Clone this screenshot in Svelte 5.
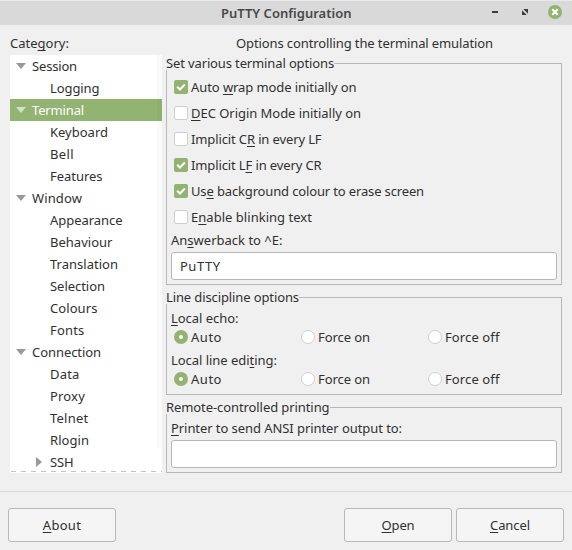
<script>
  // Distributes the remaining space between letters so a label has the given width.
  function fit(node, width) {
    const apply = () => {
      node.style.letterSpacing = '0px';
      const natural = node.getBoundingClientRect().width;
      const count = node.textContent.length;
      node.style.letterSpacing = `${(width - natural) / count}px`;
    };
    apply();
    document.fonts?.ready.then(apply);
  }

  const tree = [
    ['Session', 0, 45, 'open'], ['Logging', 1, 49.5],
    ['Terminal', 0, 52, 'open', true], ['Keyboard', 1, 58], ['Bell', 1, 24], ['Features', 1, 52.5],
    ['Window', 0, 50, 'open'], ['Appearance', 1, 72.5], ['Behaviour', 1, 62.5], ['Translation', 1, 68],
    ['Selection', 1, 55], ['Colours', 1, 47.5], ['Fonts', 1, 34.5],
    ['Connection', 0, 69, 'open'], ['Data', 1, 29.5], ['Proxy', 1, 35], ['Telnet', 1, 38.5],
    ['Rlogin', 1, 39], ['SSH', 1, 23.5, 'closed']
  ];

  // An underscore precedes the mnemonic letter.
  const checks = [
    ['Auto _wrap mode initially on', 165.5, true],
    ['_DEC Origin Mode initially on', 170, false],
    ['Implicit C_R in every LF', 130.5, false],
    ['Implicit L_F in every CR', 130.5, true],
    ['Us_e background colour to erase screen', 233, true],
    ['E_nable blinking text', 121, false]
  ];
  const radios = [['_Local echo:', 67.5], ['Local line edi_ting:', 106]];
  const choices = [['Auto', 31, true], ['Force on', 52, false], ['Force off', 54.5, false]];
</script>

{#snippet label(text, width)}
  {@const i = text.indexOf('_')}
  <span class="label" use:fit={width}>{#if i < 0}{text}{:else}{text.slice(0, i)}<u>{text[i + 1]}</u>{text.slice(i + 2)}{/if}</span>
{/snippet}

<div class="window">
  <header>
    <div class="title">{@render label('PuTTY Configuration', 130.5)}</div>
    <div class="controls">
      <svg width="6" height="14" viewBox="0 0 6 14"><path d="M0 6h6v2H0z" fill="#3c3c3c" /></svg>
      <svg width="6" height="14" viewBox="0 0 6 14"><path d="M1.3 4H6v4.7zM0 5.3 4.7 10H0z" fill="#3c3c3c" /></svg>
      <svg width="14" height="14" viewBox="0 0 14 14"><circle cx="7" cy="7" r="7" fill="#92b372" /><path d="m4.3 4.3 5.4 5.4m0-5.4-5.4 5.4" stroke="#fff" stroke-width="2.1" /></svg>
    </div>
  </header>

  <main>
    <aside>
      <div class="caption">{@render label('Cate_gory:', 59)}</div>
      <div class="tree">
        {#each tree as [name, depth, width, arrow, selected]}
          <div class="node" class:child={depth} class:selected>
            <span class="arrow">
              {#if arrow === 'open'}
                <svg width="10" height="6" viewBox="0 0 10 6"><path d="M0 0h10L5 6z" fill={selected ? '#d3e1c7' : '#999'} /></svg>
              {:else if arrow === 'closed'}
                <svg width="6" height="10" viewBox="0 0 6 10"><path d="M0 0v10l6-5z" fill="#999" /></svg>
              {/if}
            </span>
            {@render label(name, width)}
          </div>
        {/each}
        <div class="scroll"></div>
        <div class="more"></div>
      </div>
    </aside>

    <section>
      <div class="heading">{@render label('Options controlling the terminal emulation', 257)}</div>

      <div class="frame terminal">
        <div class="legend">{@render label('Set various terminal options', 168)}</div>
        <div class="checks">
          {#each checks as [text, width, on]}
            <div class="check">
              <span class="box" class:on>
                {#if on}<svg width="14" height="14" viewBox="0 0 14 14"><path d="m3.2 6.8 2.7 2.7 5-5" fill="none" stroke="#fff" stroke-width="2.1" /></svg>{/if}
              </span>
              {@render label(text, width)}
            </div>
          {/each}
        </div>
        <div class="field">{@render label('An_swerback to ^E:', 111.5)}</div>
        <div class="input">{@render label('PuTTY', 40.5)}</div>
      </div>

      <div class="frame discipline">
        <div class="legend">{@render label('Line discipline options', 133)}</div>
        {#each radios as [text, width]}
          <div class="group">
            <div class="field">{@render label(text, width)}</div>
            <div class="choices">
              {#each choices as [choice, w, on]}
                <div class="choice"><span class="radio" class:on></span>{@render label(choice, w)}</div>
              {/each}
            </div>
          </div>
        {/each}
      </div>

      <div class="frame printing">
        <div class="legend">{@render label('Remote-controlled printing', 163.5)}</div>
        <div class="field">{@render label('_Printer to send ANSI printer output to:', 231)}</div>
        <div class="input"></div>
      </div>
    </section>
  </main>

  <footer>
    <div class="button about">{@render label('_About', 38.5)}</div>
    <div class="button">{@render label('_Open', 33)}</div>
    <div class="button">{@render label('_Cancel', 40)}</div>
  </footer>
</div>

<style>
  .window {
    width: 572px;
    height: 550px;
    box-sizing: border-box;
    display: flex;
    flex-direction: column;
    overflow: hidden;
    background: #f0f0f0;
    color: #303030;
    font: 13px/18px 'Noto Sans', 'Open Sans', sans-serif;
  }
  .window :global(*) { box-sizing: border-box; }
  svg { display: block; }
  .label { white-space: pre; display: inline-block; flex: none; }
  u { text-decoration: underline; text-decoration-thickness: 1px; text-underline-offset: 2px; text-decoration-skip-ink: none; }

  header {
    height: 25px;
    flex: none;
    display: grid;
    grid-template-columns: 221px 1fr auto;
    background: #d9d9d9;
    border-top: 1px solid #e9e9e9;
  }
  .title { grid-column: 2; padding-top: 3px; font-weight: 600; color: #484848; }
  .controls { display: flex; padding: 4px 10px 0 0; }
  .controls svg:nth-child(2) { margin: 0 20px 0 24px; }

  main { display: flex; height: 466px; flex: none; }
  aside { width: 152px; margin-left: 10px; }
  .caption { height: 30px; padding-top: 9px; }
  .tree { height: 418px; position: relative; background: #fff; }
  .node { height: 22px; display: flex; align-items: center; padding: 0 0 0 5px; }
  .node.child { padding-left: 23px; }
  .node.selected { background: #92b372; color: #fff; }
  .arrow { width: 17px; display: flex; }
  .node:not(.child) .arrow { padding-left: 1px; }
  .child .arrow { padding-left: 3px; }
  .scroll { position: absolute; right: 0; top: 0; width: 5px; height: 393px; background: rgba(0, 0, 0, 0.018); }
  .more { position: absolute; left: 1px; right: 0; bottom: 1px; height: 1px; background: repeating-linear-gradient(90deg, #c4c4c4 0 5px, transparent 5px 10px); }

  section { width: 396px; margin-left: 4px; }
  .heading { height: 38px; padding: 9px 0 0 70px; }
  .frame { border: 1px solid #b8b8b8; padding: 0 4px; }
  .terminal { height: 222px; margin-bottom: 12px; }
  .discipline { height: 98px; margin-bottom: 12px; }
  .printing { height: 66px; }
  .legend { width: max-content; height: 14px; line-height: 14px; margin: -8px 0 0 -5px; background: #f0f0f0; }
  .checks { padding: 4px 0 0 3px; }
  .check { height: 26px; display: flex; align-items: center; gap: 3px; }
  .box, .radio { width: 14px; height: 14px; flex: none; border: 1px solid #cfcfcf; border-radius: 2px; background: #fff; }
  .box.on { border: 0; background: #92b372; }
  .radio { border-radius: 50%; }
  .radio.on { border: 5px solid #92b372; }
  .field { height: 18px; }
  .terminal .field { margin: 1px 0 3px; }
  .input { height: 28px; border: 1px solid #b8b8b8; border-radius: 3px; background: #fff; padding: 4px 8px 0; }
  .group { height: 42px; }
  .discipline .legend { margin-bottom: 5px; }
  .discipline .field { height: 19px; }
  .choices { display: grid; grid-template-columns: 127px 127px 1fr; padding-left: 3px; height: 18px; }
  .choice { display: flex; align-items: center; gap: 3px; }
  .printing .legend { margin-bottom: 5px; }
  .printing .field { height: 21px; }

  footer {
    height: 59px;
    flex: none;
    display: flex;
    gap: 4px;
    padding: 16px 8px 8px;
    border-top: 1px solid #d8d8d8;
  }
  .button { width: 108px; height: 34px; display: flex; align-items: center; justify-content: center; border: 1px solid #b8b8b8; border-radius: 3px; background: #f5f5f5; }
  .about { margin-right: auto; }
</style>
